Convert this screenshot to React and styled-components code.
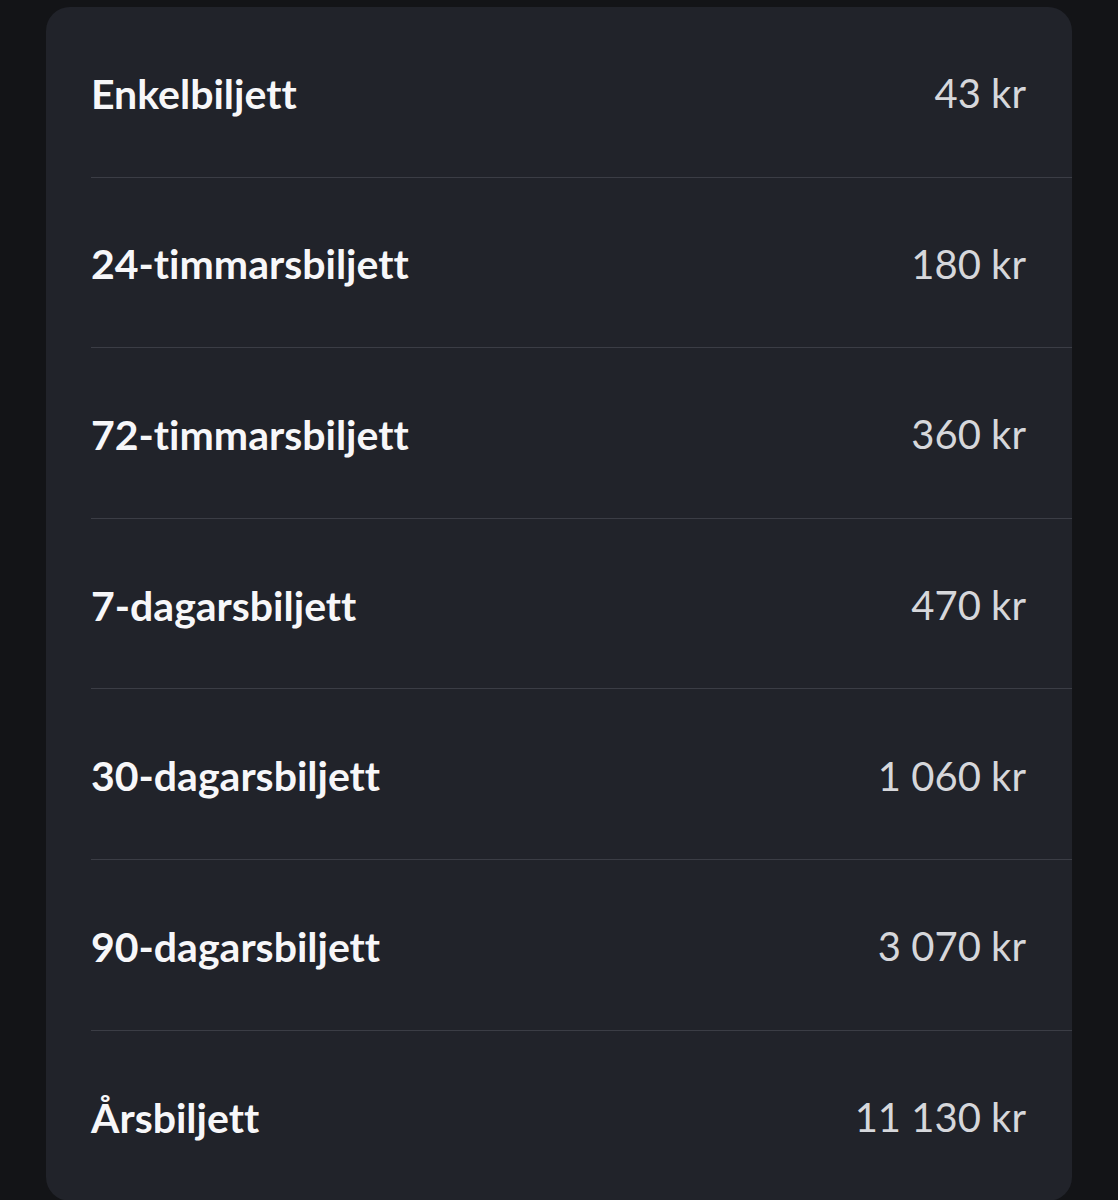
import React from "react";
import styled, { createGlobalStyle } from "styled-components";

const Global = createGlobalStyle`
  html, body { margin: 0; padding: 0; background: #131417; }
  body {
    font-family: Lato, "Open Sans", sans-serif;
    -webkit-font-smoothing: antialiased;
    font-variant-ligatures: none;
    font-feature-settings: "liga" 0, "clig" 0;
  }
`;

const Page = styled.div`
  min-height: 1200px;
  padding: 7px 46px 0 46px;
  box-sizing: border-box;
  background: #131417;
`;

const Card = styled.div`
  background: #21232a;
  border-radius: 24px;
  padding-left: 45px;
  overflow: hidden;
`;

const Row = styled.div`
  box-sizing: border-box;
  height: 170.6px;
  display: flex;
  align-items: center;
  justify-content: space-between;
  padding: 3px 46px 0 0;
  border-bottom: ${(p) => (p.$last ? "none" : "1px solid #3b3d45")};
`;

const Label = styled.span`
  font-weight: 700;
  font-size: 41px;
  color: #f7f7f9;
`;

const Price = styled.span`
  font-weight: 400;
  font-size: 40px;
  color: #d6d7db;
`;

const tickets = [
  ["Enkelbiljett", "43 kr"],
  ["24-timmarsbiljett", "180 kr"],
  ["72-timmarsbiljett", "360 kr"],
  ["7-dagarsbiljett", "470 kr"],
  ["30-dagarsbiljett", "1 060 kr"],
  ["90-dagarsbiljett", "3 070 kr"],
  ["Årsbiljett", "11 130 kr"],
];

export default function App() {
  return (
    <Page>
      <Global />
      <Card>
        {tickets.map(([name, price], i) => (
          <Row key={name} $last={i === tickets.length - 1}>
            <Label>{name}</Label>
            <Price>{price}</Price>
          </Row>
        ))}
      </Card>
    </Page>
  );
}
